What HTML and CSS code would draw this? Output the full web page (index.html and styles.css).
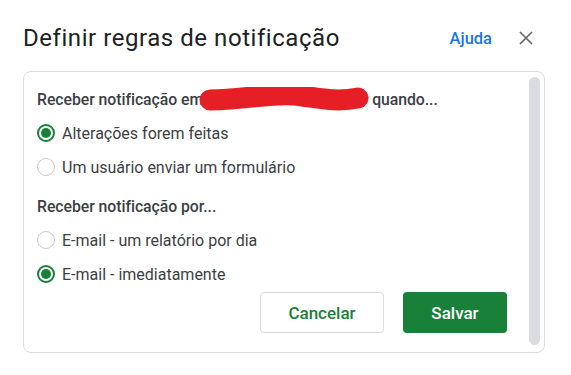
FILE: index.html
```html
<!DOCTYPE html>
<html lang="pt">
<head>
<meta charset="utf-8">
<link rel="stylesheet" href="styles.css">
</head>
<body>
<div class="dialog">
  <div class="header">
    <h1 class="title">Definir regras de notificação</h1>
    <a class="help">Ajuda</a>
    <span class="close">
      <svg width="14" height="14" viewBox="0 0 14 14"><path d="M1 1L13 13M13 1L1 13" stroke="#5f6368" stroke-width="1.6" fill="none"/></svg>
    </span>
  </div>
  <div class="box">
    <div class="content">
      <div class="heading first">Receber notificação em<span class="redact"><svg width="172" height="26" viewBox="0 0 172 26"><path d="M12 13 C50 12, 75 6, 96 8 S 136 16, 160 11" stroke="#e61e25" stroke-width="21" stroke-linecap="round" fill="none"/></svg></span>quando...</div>
      <div class="row"><span class="radio checked"></span><span>Alterações forem feitas</span></div>
      <div class="row"><span class="radio"></span><span>Um usuário enviar um formulário</span></div>
      <div class="heading second">Receber notificação por...</div>
      <div class="row"><span class="radio"></span><span>E-mail - um relatório por dia</span></div>
      <div class="row"><span class="radio checked"></span><span>E-mail - imediatamente</span></div>
      <div class="actions">
        <button class="btn cancel">Cancelar</button>
        <button class="btn save">Salvar</button>
      </div>
    </div>
    <div class="scrollbar"></div>
  </div>
</div>
</body>
</html>
```
FILE: styles.css
```css
* { box-sizing: border-box; }
html, body { margin: 0; padding: 0; background: #fff; }
body { font-family: Roboto, "Noto Sans", Arial, sans-serif; color: #3c4043; }
.dialog { width: 571px; height: 375px; padding: 22px 26px 0 23px; }
.header { display: flex; align-items: center; height: 32px; }
.title { margin: 0; flex: 1; font-size: 24px; font-weight: 400; color: #202124; line-height: 32px; letter-spacing: 0.55px; }
.help { color: #1a73e8; font-size: 16.5px; font-weight: 500; margin-right: 27px; margin-top: 1px; }
.close { display: flex; width: 14px; height: 14px; margin-right: 12px; margin-top: -1px; }
.box { margin-top: 17px; height: 282px; border: 1px solid #dadce0; border-radius: 8px; display: flex; }
.content { flex: 1; padding-left: 13px; padding-right: 22px; }
.heading { font-size: 15.8px; font-weight: 500; line-height: 20px; color: #3c4043; white-space: nowrap; letter-spacing: -0.05px; }
.heading.first { margin-top: 18px; }
.heading.second { margin-top: 13px; }
.redact { display: inline-block; width: 172px; height: 20px; margin-left: -5px; margin-right: 2px; vertical-align: top; }
.redact svg { display: block; margin-top: -3px; }
.row { display: flex; align-items: center; height: 34px; font-size: 16px; color: #3c4043; }
.row:nth-of-type(2) { margin-top: 6px; }
.heading.second + .row { margin-top: 6px; }
.radio { width: 18px; height: 18px; border-radius: 50%; border: 1.5px solid #c8cacd; margin-right: 7px; display: flex; align-items: center; justify-content: center; flex: none; }
.radio.checked { border: 2px solid #188038; }
.radio.checked::after { content: ""; width: 10px; height: 10px; border-radius: 50%; background: #188038; }
.actions { display: flex; justify-content: flex-end; gap: 19px; margin-top: 1px; }
.btn { height: 41px; font-family: Roboto, Arial, sans-serif; font-size: 17px; font-weight: 500; border-radius: 4px; cursor: pointer; }
.cancel { width: 124px; background: #fff; color: #188038; border: 1px solid #dadce0; }
.save { width: 104px; background: #188038; color: #fff; border: none; }
.scrollbar { width: 11px; height: 268px; margin-top: 5px; margin-right: 4px; background: #dadce0; border-radius: 6px; }
```
